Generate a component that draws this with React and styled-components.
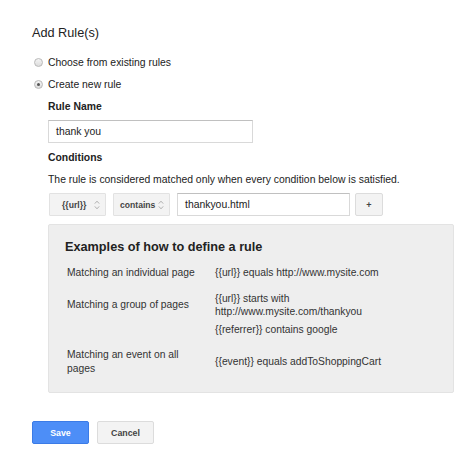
import React from "react";
import styled, { createGlobalStyle } from "styled-components";

const GlobalStyle = createGlobalStyle`
  html, body {
    margin: 0;
    padding: 0;
    background: #fff;
  }
  body {
    font-family: "Liberation Sans", Arial, sans-serif;
    color: #222;
  }
`;

const Page = styled.div`
  padding: 26px 0 0 32px;
  width: 465px;
  height: 458px;
  box-sizing: border-box;
`;

const Title = styled.h2`
  margin: 0;
  font-size: 12.7px;
  line-height: 15px;
  font-weight: normal;
  color: #222;
`;

const RadioRow = styled.label`
  display: flex;
  align-items: center;
  gap: 5px;
  height: 14px;
  margin-top: ${({ $mt }) => $mt}px;
  font-size: 10.4px;
  color: #222;
`;

const RadioDot = styled.span`
  width: 9px;
  height: 9px;
  border-radius: 50%;
  box-sizing: border-box;
  border: 1px solid #b9b9b9;
  background: linear-gradient(#f4f4f4, #dcdcdc);
  display: flex;
  align-items: center;
  justify-content: center;
  margin-left: 2px;

  &::after {
    content: "";
    width: 3px;
    height: 3px;
    border-radius: 50%;
    background: ${({ $checked }) => ($checked ? "#555" : "transparent")};
  }
`;

const Section = styled.div`
  margin-left: 16px;
`;

const FieldLabel = styled.div`
  font-size: 10.4px;
  font-weight: bold;
  line-height: 14px;
  margin-top: ${({ $mt }) => $mt}px;
  color: #222;
`;

const TextInput = styled.div`
  box-sizing: border-box;
  width: ${({ $w }) => $w}px;
  height: 23px;
  border: 1px solid #d9d9d9;
  border-top-color: #c0c0c0;
  background: #fff;
  font-size: 10.4px;
  padding-left: 7px;
  display: flex;
  align-items: center;
  color: #222;
  margin-top: ${({ $mt = 0 }) => $mt}px;
`;

const Description = styled.p`
  margin: 8.5px 0 0;
  font-size: 10.4px;
  line-height: 14px;
  color: #222;
`;

const ConditionRow = styled.div`
  display: flex;
  align-items: center;
  margin-top: 6px;
  margin-left: 1px;
`;

const SelectBox = styled.div`
  box-sizing: border-box;
  width: 57px;
  height: 23px;
  margin-right: ${({ $mr }) => $mr}px;
  background: #f3f3f3;
  border: 1px solid #e2e2e2;
  border-radius: 1px;
  display: flex;
  align-items: center;
  justify-content: space-between;
  padding: 0 5px 0 ${({ $pl }) => $pl}px;
  font-size: 8.6px;
  font-weight: bold;
  color: #444;
`;

const PlusButton = styled.div`
  box-sizing: border-box;
  width: 28px;
  height: 23px;
  margin-left: 5px;
  background: #f3f3f3;
  border: 1px solid #dcdcdc;
  border-radius: 2px;
  display: flex;
  align-items: center;
  justify-content: center;
  font-size: 9px;
  font-weight: bold;
  color: #444;
`;

const ExamplesBox = styled.div`
  box-sizing: border-box;
  width: 406px;
  height: 169px;
  margin-top: 8px;
  background: #eeeeee;
  border: 1px solid #e3e3e3;
  border-radius: 2px;
  padding: 15px 16px 0 16px;
`;

const ExamplesTitle = styled.h3`
  margin: 0;
  font-size: 12.7px;
  line-height: 15px;
  font-weight: bold;
  color: #222;
`;

const ExampleRow = styled.div`
  display: grid;
  grid-template-columns: 148px 1fr;
  align-items: center;
  margin-top: ${({ $mt }) => $mt}px;
  padding-left: 2px;
  font-size: 10.3px;
  line-height: 13.5px;
  color: #333;
`;

const Actions = styled.div`
  display: flex;
  gap: 8px;
  margin-top: 28px;
`;

const Button = styled.div`
  box-sizing: border-box;
  width: 57px;
  height: 23px;
  border-radius: 2px;
  display: flex;
  align-items: center;
  justify-content: center;
  font-size: 8.8px;
  font-weight: bold;
  background: ${({ $primary }) => ($primary ? "#4d8ef7" : "#f3f3f3")};
  border: 1px solid ${({ $primary }) => ($primary ? "#3b7be6" : "#dcdcdc")};
  color: ${({ $primary }) => ($primary ? "#fff" : "#444")};
`;

const Caret = () => (
  <svg width="6" height="10" viewBox="0 0 6 10" fill="none" stroke="#a8a8a8" strokeWidth="0.9">
    <path d="M0.8 3.6 L3 1.2 L5.2 3.6" />
    <path d="M0.8 6.4 L3 8.8 L5.2 6.4" />
  </svg>
);

const examples = [
  { label: "Matching an individual page", value: "{{url}} equals http://www.mysite.com", mt: 11 },
  {
    label: "Matching a group of pages",
    value: (
      <>
        {"{{url}} starts with"}
        <br />
        http://www.mysite.com/thankyou
      </>
    ),
    mt: 12,
  },
  { label: "", value: "{{referrer}} contains google", mt: 4 },
  {
    label: (
      <>
        Matching an event on all
        <br />
        pages
      </>
    ),
    value: "{{event}} equals addToShoppingCart",
    mt: 12,
  },
];

export default function App() {
  return (
    <Page>
      <GlobalStyle />
      <Title>Add Rule(s)</Title>
      <RadioRow $mt={14}>
        <RadioDot />
        Choose from existing rules
      </RadioRow>
      <RadioRow $mt={8}>
        <RadioDot $checked />
        Create new rule
      </RadioRow>
      <Section>
        <FieldLabel $mt={9}>Rule Name</FieldLabel>
        <TextInput $w={205} $mt={6}>thank you</TextInput>
        <FieldLabel $mt={7.5}>Conditions</FieldLabel>
        <Description>
          The rule is considered matched only when every condition below is satisfied.
        </Description>
        <ConditionRow>
          <SelectBox $mr={7} $pl={12}>
            {"{{url}}"}
            <Caret />
          </SelectBox>
          <SelectBox $mr={7} $pl={6}>
            contains
            <Caret />
          </SelectBox>
          <TextInput $w={173}>thankyou.html</TextInput>
          <PlusButton>+</PlusButton>
        </ConditionRow>
        <ExamplesBox>
          <ExamplesTitle>Examples of how to define a rule</ExamplesTitle>
          {examples.map((ex, i) => (
            <ExampleRow key={i} $mt={ex.mt}>
              <span>{ex.label}</span>
              <span>{ex.value}</span>
            </ExampleRow>
          ))}
        </ExamplesBox>
      </Section>
      <Actions>
        <Button $primary>Save</Button>
        <Button>Cancel</Button>
      </Actions>
    </Page>
  );
}
